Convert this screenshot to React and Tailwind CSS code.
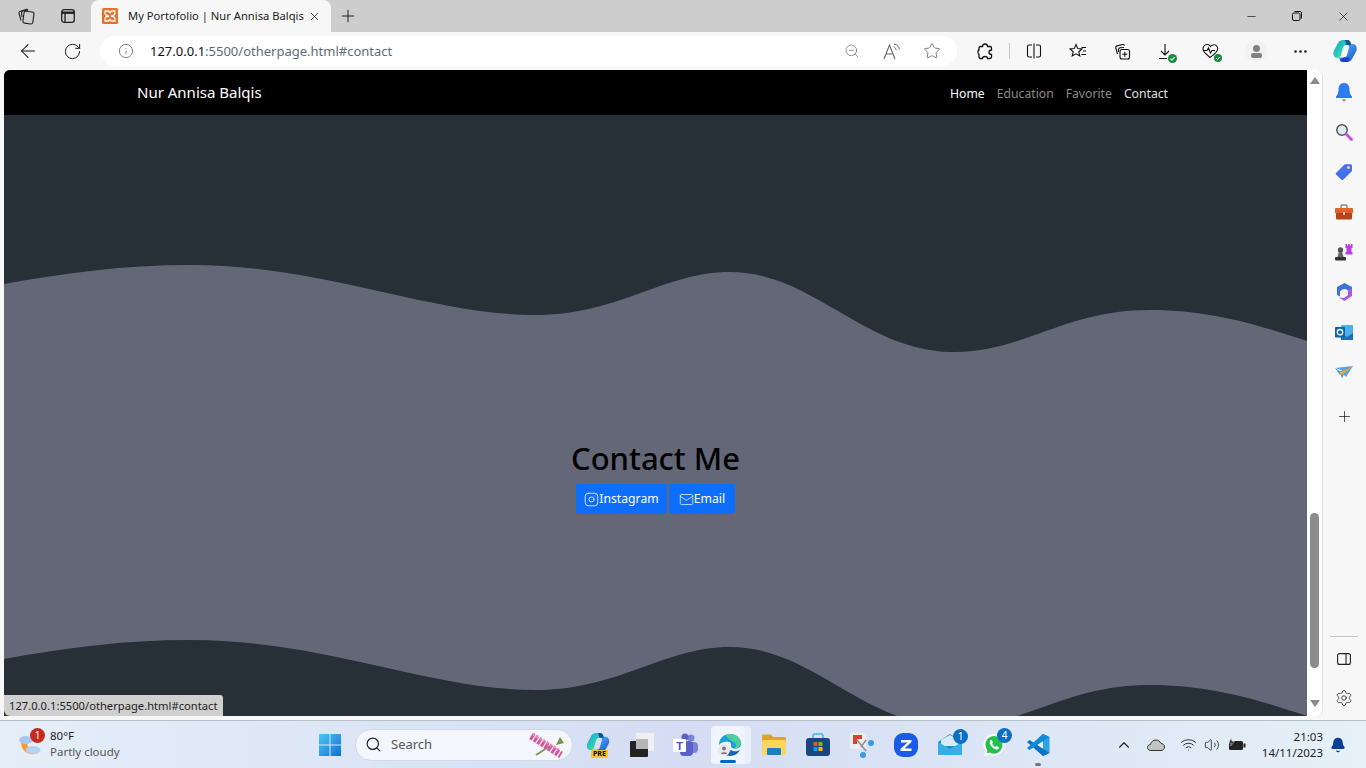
import React from "react";
import { ArrowLeft, RotateCw, Info, X, Plus, Minus, ZoomOut, Star, MoreHorizontal, Search, ChevronUp, Wifi, Volume2, Settings, Bell, Instagram, Mail } from "lucide-react";

const CURVE = "M0 19 C 60 8 120 0 186 0 C 320 0 425 50 531 50 C 615 50 660 7 726 7 C 810 7 860 87 951 87 C 1020 87 1060 45 1146 45 C 1210 45 1260 62 1303 76";

function Slot({ w = "w-[44px]", children }) {
  return <div className={`${w} h-full shrink-0 flex items-center justify-center`}>{children}</div>;
}

function Check({ size = 9 }) {
  return (
    <svg width={size} height={size} viewBox="0 0 10 10" className="absolute -right-[3px] -bottom-[3px]">
      <circle cx="5" cy="5" r="5" fill="#1b8a3d" />
      <path d="M2.7 5.2 4.4 6.8 7.4 3.6" stroke="#fff" strokeWidth="1.2" fill="none" />
    </svg>
  );
}

function CopilotMark({ w = 24, h = 22, id }) {
  return (
    <svg width={w} height={h} viewBox="0 0 24 22">
      <defs>
        <linearGradient id={`${id}a`} x1="0" y1="0" x2="1" y2="1"><stop offset="0" stopColor="#1b9fe0" /><stop offset=".55" stopColor="#2fd0b0" /><stop offset="1" stopColor="#9fe6a0" /></linearGradient>
        <linearGradient id={`${id}b`} x1="0" y1="0" x2="1" y2="1"><stop offset="0" stopColor="#4fc0f2" /><stop offset="1" stopColor="#1c4fd8" /></linearGradient>
      </defs>
      <path d="M10 0H14.500C16 0 17 1 17.500 2.500L18 5H13.500C11.500 5 10.500 6 10 7.500L8 15C7.500 17 6 18 4.500 18 2 18 .2 16 .2 13.500 .2 12.500 .5 11.500 1 10.500L5 3C6 1 8 0 10 0Z" fill={`url(#${id}a)`} />
      <path d="M13.500 4H19.500C22 4 23.800 6 23.800 8.500 23.800 9.500 23.500 10.500 23 11.500L19 19C18 21 16 22 14 22H9.500C8 22 7 21 6.500 19.500L6 17.500H10.500C12.500 17.500 13.500 16.500 14 15L16 7.500C16.300 6 15.500 4.500 13.500 4Z" fill={`url(#${id}b)`} />
      <path d="M7 19.500C7.500 21 8.500 22 10 22H15L17 17.500 11 17.500Z" fill="#1d3fc8" />
      <path d="M17.500 2.500C17 1 16 0 14.500 0H12L13.500 5H18Z" fill="#10508f" />
    </svg>
  );
}

function TabBar() {
  return (
    <div className="h-[32px] bg-[#cdcdcd] flex items-end shrink-0">
      <div className="w-[5px] shrink-0" />
      <Slot w="w-[42px]">
        <svg width="18" height="18" viewBox="0 0 18 18" fill="none" stroke="#222" strokeWidth="1.1">
          <rect x="6.5" y="4.5" width="10" height="12" rx="2" transform="rotate(8 11 10)" />
          <path d="M4 13.5 2 6.5C1.7 5.4 2.3 4.6 3.3 4.3L9 2.4C10 2.1 10.6 2.4 11 3.2" />
          <path d="M5 10 4.5 6C4.4 5 5 4.2 6 4L11 3" />
        </svg>
      </Slot>
      <Slot w="w-[42px]">
        <svg width="16" height="16" viewBox="0 0 16 16" fill="none" stroke="#222" strokeWidth="1.3">
          <rect x="1.7" y="1.7" width="12.6" height="12.6" rx="2.4" />
          <path d="M1.7 4.7H14.3" strokeWidth="2.4" />
          <path d="M5 4.7V14.3" />
        </svg>
      </Slot>
      <div className="w-[240px] h-[32px] ml-[2px] bg-[#f7f7f7] rounded-t-[8px] flex items-center pl-[11px] pr-[10px] shrink-0">
        <svg width="16" height="16" viewBox="0 0 16 16" className="shrink-0">
          <rect width="16" height="16" rx="1.5" fill="#e8702a" />
          <path d="M3.200 3H6.500L8 4.700 9.500 3H12.800V6L11 8 12.800 10V13H9.500L8 11.300 6.500 13H3.200V10L5 8 3.200 6Z" fill="none" stroke="#fff" strokeWidth="1.400" />
          <circle cx="6" cy="8" r="1.200" fill="#fff" />
          <circle cx="10" cy="8" r="1.200" fill="#fff" />
        </svg>
        <span className="ml-[10px] text-[11.200px] text-[#222] whitespace-nowrap flex-1 leading-none">My Portofolio | Nur Annisa Balqis</span>
        <X size={13} strokeWidth={1.5} color="#222" className="shrink-0" />
      </div>
      <Slot w="w-[34px]"><Plus size={20} strokeWidth={1.1} color="#111" /></Slot>
      <div className="flex-1" />
      <Slot w="w-[46px]"><Minus size={13} strokeWidth={1.2} color="#111" /></Slot>
      <Slot w="w-[46px]">
        <svg width="12" height="12" viewBox="0 0 12 12" fill="none" stroke="#111" strokeWidth="1">
          <rect x="1.500" y="3" width="7.500" height="7.500" rx="1.500" />
          <path d="M3.500 1.500H9C10 1.500 10.500 2 10.500 3V8.500" />
        </svg>
      </Slot>
      <Slot w="w-[46px]"><X size={15} strokeWidth={1.1} color="#111" /></Slot>
    </div>
  );
}

function Toolbar() {
  return (
    <div className="h-[38px] bg-[#f7f7f7] flex items-center shrink-0 pl-[6px]">
      <Slot><ArrowLeft size={22} strokeWidth={1.1} color="#111" /></Slot>
      <Slot><RotateCw size={19} strokeWidth={1.2} color="#111" /></Slot>
      <div className="ml-[6px] w-[857px] h-[30px] bg-white rounded-full flex items-center shrink-0 pl-[18px]">
        <Info size={16} strokeWidth={1.2} color="#666" />
        <span className="ml-[16px] text-[13px] text-[#5f6b78] leading-none"><span className="text-[#111]">127.0.0.1</span>:5500/otherpage.html#contact</span>
        <div className="flex-1" />
        <ZoomOut size={16} strokeWidth={1.2} color="#777" />
        <div className="w-[23px]" />
        <svg width="18" height="17" viewBox="0 0 18 17" fill="none" stroke="#666" strokeWidth="1.100" className="shrink-0">
          <path d="M1 16 6.500 2 12 16M3 11H10" />
          <path d="M10.500 4C12 4.300 13 5.500 13.200 7M11 1C14 1.300 16 3.500 16.400 6.500" strokeWidth="1" />
        </svg>
        <div className="w-[22px]" />
        <Star size={18} strokeWidth={1.1} color="#666" />
        <div className="w-[16px]" />
      </div>
      <div className="w-[6px]" />
      <Slot>
        <svg width="16" height="17" viewBox="0 0 16 17" fill="none" stroke="#111" strokeWidth="1.300">
          <path d="M5.500 3.500C5.500 2 6.500 1 8 1 9.500 1 10.500 2 10.500 3.500H13C14 3.500 14.500 4 14.500 5V7C13 7 12 8 12 9.300 12 10.800 13 11.500 14.500 11.500V13.500C14.500 14.800 14 15.500 13 15.500H10.500C10.500 14.500 9.500 13.500 8 13.500 6.500 13.500 5.500 14.500 5.500 15.500H3.500C2.500 15.500 2 14.800 2 14V11.500C1.500 11.500 1 10.500 1 9.300 1 8 1.500 7 2 7V5C2 4 2.500 3.500 3.500 3.500Z" />
        </svg>
      </Slot>
      <div className="w-[1px] h-[16px] bg-[#c8c8c8] mx-[2px] shrink-0" />
      <Slot>
        <svg width="16" height="16" viewBox="0 0 16 16" fill="none" stroke="#111" strokeWidth="1.1">
          <path d="M6 2H3C2 2 1.500 2.500 1.500 3.500V12.500C1.500 13.500 2 14 3 14H6M10 2H13C14 2 14.500 2.500 14.500 3.500V12.500C14.500 13.500 14 14 13 14H10M8 .5V15.500" />
        </svg>
      </Slot>
      <Slot>
        <svg width="18" height="16" viewBox="0 0 18 16" fill="none" stroke="#111" strokeWidth="1.1">
          <path d="M7 1.500 8.800 5.600 13 6 9.800 8.800 10.800 13 7 10.800 3.200 13 4.200 8.800 1 6 5.200 5.600Z" />
          <path d="M12.500 4.500H17M14 8H17M12.500 11.500H17" />
        </svg>
      </Slot>
      <Slot>
        <svg width="17" height="17" viewBox="0 0 17 17" fill="none" stroke="#111" strokeWidth="1.1">
          <path d="M3.500 11 1.800 5C1.500 4 2 3.200 3 2.900L8.500 1.500C9.500 1.300 10.200 1.800 10.500 2.500" />
          <path d="M4.500 9V6.500C4.500 5.500 5 5 6 4.800L10 4.500" />
          <rect x="6" y="6.500" width="9.500" height="9.500" rx="2" />
          <path d="M10.800 8.800V13.700M8.300 11.200H13.300" />
        </svg>
      </Slot>
      <Slot>
        <div className="relative">
          <svg width="16" height="17" viewBox="0 0 16 17" fill="none" stroke="#111" strokeWidth="1.1">
            <path d="M7 1V11.500M3 8 7 12 11 8M1 15.500H9" />
          </svg>
          <Check />
        </div>
      </Slot>
      <Slot>
        <div className="relative">
          <svg width="17" height="16" viewBox="0 0 17 16" fill="none" stroke="#111" strokeWidth="1.1">
            <path d="M8.500 3.500C7 1 3.500 1 2 3 .5 5 1 7.500 2.500 9.500L8 14.500C10 13 13.500 10.500 15 8 16.500 5 15 2 12.500 1.800 10.800 1.600 9.500 2.300 8.500 3.500Z" />
            <path d="M1 7.500H5L6.500 5 8.500 10 10 7.500H13" />
          </svg>
          <Check size={8} />
        </div>
      </Slot>
      <div className="w-[2px] shrink-0" />
      <Slot>
        <div className="w-[22px] h-[22px] rounded-full bg-[#f1f1f1] flex flex-col items-center justify-center">
          <div className="w-[7px] h-[7px] rounded-full bg-[#808080]" />
          <div className="w-[11px] h-[5px] rounded-[2px] bg-[#808080] mt-[1px]" />
        </div>
      </Slot>
      <Slot w="w-[45px]"><MoreHorizontal size={17} strokeWidth={1.8} color="#222" /></Slot>
      <Slot w="w-[43px]"><CopilotMark id="cpa" /></Slot>
    </div>
  );
}

function Page() {
  return (
    <div className="relative w-[1303px] ml-[4px] h-[646px] shrink-0 overflow-hidden rounded-tl-[6px] flex flex-col bg-[#272f37]">
      <nav className="h-[45px] bg-black flex items-center shrink-0 pl-[133px] pr-[139px]">
        <span className="text-[15px] text-white leading-none">Nur Annisa Balqis</span>
        <div className="flex-1" />
        <div className="flex items-center gap-[12px] text-[12.200px] leading-none pt-[3px]">
          <span className="text-white">Home</span>
          <span className="text-[#8a8a8a]">Education</span>
          <span className="text-[#8a8a8a]">Favorite</span>
          <span className="text-[#e2e2e2]">Contact</span>
        </div>
      </nav>
      <div className="h-[150px] shrink-0" />
      <svg width="1303" height="87" viewBox="0 0 1303 87" className="block shrink-0">
        <path d={`${CURVE} V87 H0 Z`} fill="#646777" />
      </svg>
      <section className="h-[288px] bg-[#646777] shrink-0 flex flex-col items-center pt-[86px]">
        <h1 className="text-[31px] font-medium text-black leading-[40px] whitespace-nowrap">Contact Me</h1>
        <div className="flex gap-[2px] mt-[6px]">
          <a className="h-[30px] w-[91px] bg-[#0d6efd] rounded-[2px] text-white text-[12.200px] flex items-center justify-center leading-none">
            <Instagram size={15} strokeWidth={1.3} />Instagram
          </a>
          <a className="h-[30px] w-[66px] bg-[#0d6efd] rounded-[2px] text-white text-[12.200px] flex items-center justify-center leading-none">
            <Mail size={15} strokeWidth={1.1} />Email
          </a>
        </div>
      </section>
      <svg width="1303" height="76" viewBox="0 0 1303 76" className="block shrink-0">
        <path d={`${CURVE} V87 H0 Z`} fill="#272f37" />
        <path d={`${CURVE} V0 H0 Z`} fill="#646777" />
      </svg>
      <div className="absolute left-0 bottom-0 h-[21px] w-[219px] bg-[#cfcfcf] rounded-tr-[3px] rounded-bl-[6px] flex items-center pl-[5px] text-[11.200px] text-[#222] leading-none whitespace-nowrap">
        127.0.0.1:5500/otherpage.html#contact
      </div>
    </div>
  );
}

function Scrollbar() {
  return (
    <div className="w-[16px] h-[646px] bg-white shrink-0 rounded-r-[6px] border-r border-[#e2e2e2] flex flex-col items-center">
      <div className="mt-[7px] w-0 h-0 border-l-[5px] border-r-[5px] border-b-[7px] border-l-transparent border-r-transparent border-b-[#8a8a8a]" />
      <div className="mt-[429px] w-[9px] h-[155px] rounded-full bg-[#8b8b8b]" />
      <div className="mt-[32px] w-0 h-0 border-l-[5px] border-r-[5px] border-t-[7px] border-l-transparent border-r-transparent border-t-[#8a8a8a]" />
    </div>
  );
}

function Side({ children }) {
  return <div className="h-[40px] w-full flex items-center justify-center shrink-0">{children}</div>;
}

function Sidebar() {
  return (
    <div className="flex-1 h-[646px] flex flex-col items-center pt-[2px] pr-[1px]">
      <Side>
        <svg width="18" height="20" viewBox="0 0 18 20">
          <path d="M9 1C5 1 3.500 4 3.500 7.500 3.500 11 2.500 13 1 14.500V16H17V14.500C15.500 13 14.500 11 14.500 7.500 14.500 4 13 1 9 1Z" fill="#2f7bf0" />
          <path d="M6.500 17.500H11.500L9 19.500Z" fill="#777" />
        </svg>
      </Side>
      <Side>
        <svg width="18" height="18" viewBox="0 0 18 18" fill="none">
          <circle cx="7" cy="7" r="5.200" fill="#d7ecf7" stroke="#555" strokeWidth="1.500" />
          <path d="M11 11 16.500 16.500" stroke="#c04ee0" strokeWidth="2.800" strokeLinecap="round" />
        </svg>
      </Side>
      <Side>
        <svg width="18" height="18" viewBox="0 0 18 18">
          <path d="M1 10 9 2C9.500 1.500 10 1.200 11 1.200H15.500C16.300 1.200 17 1.800 17 2.700V7C17 8 16.700 8.500 16 9L8.500 16.500C7.800 17.200 7 17.200 6.300 16.500L1 11.500C.6 11 .6 10.500 1 10Z" fill="#4470ee" />
          <circle cx="13.500" cy="4.500" r="1.600" fill="#f6d54a" />
        </svg>
      </Side>
      <Side>
        <svg width="18" height="16" viewBox="0 0 18 16">
          <path d="M6 4V2C6 1.400 6.500 1 7 1H11C11.500 1 12 1.400 12 2V4" fill="none" stroke="#8a8a8a" strokeWidth="1.500" />
          <rect y="4" width="18" height="5.500" rx="1" fill="#e2622a" />
          <rect x="1" y="9" width="16" height="6.500" rx="1" fill="#b8431b" />
          <rect x="8" y="8" width="2" height="3" fill="#e9d6c8" />
        </svg>
      </Side>
      <Side>
        <svg width="18" height="18" viewBox="0 0 18 18">
          <circle cx="5.500" cy="7" r="2.700" fill="#555" />
          <path d="M3.800 9H7.200L8.500 14H2.500Z" fill="#666" />
          <rect y="14" width="11" height="3.500" rx="1" fill="#333" />
          <path d="M10.500 1H12V2.500H13.200V1H14.800V2.500H16V1H17.500V5H16.500V9H17.500V11.500H10.500V9H11.500V5H10.500Z" fill="#b83ee8" />
        </svg>
      </Side>
      <Side>
        <svg width="17" height="18" viewBox="0 0 17 18">
          <path d="M8.500 0 16 4V9L8.500 6 4 8V13.500L1 12V4Z" fill="#3f74d8" />
          <path d="M16 5V13L8.500 18 3 14.500 8 15 12 12V8Z" fill="#a85bd6" />
          <circle cx="8.500" cy="9" r="3" fill="#f2f2f2" />
        </svg>
      </Side>
      <Side>
        <svg width="18" height="17" viewBox="0 0 18 17">
          <rect x="6" y="1" width="12" height="15" rx="1" fill="#4db2e8" />
          <path d="M6 9 12 13 18 9V16H6Z" fill="#1c6fb8" />
          <rect y="3" width="10" height="10.500" rx="1" fill="#0f62ad" />
          <circle cx="5" cy="8.200" r="2.700" fill="none" stroke="#fff" strokeWidth="1.300" />
        </svg>
      </Side>
      <Side>
        <svg width="18" height="13" viewBox="0 0 18 13">
          <path d="M0 2 18 0 9 5Z" fill="#52a7e8" />
          <path d="M18 0 5 5.500 7 12.500 9 8Z" fill="#3d8edc" />
          <path d="M18 0 4.500 6.500 5 9 9 8Z" fill="#f4a72c" />
          <path d="M0 2 5 5.500 5 9Z" fill="#3d8edc" />
          <path d="M18 0 11 11 8 8Z" fill="#52a7e8" />
        </svg>
      </Side>
      <div className="h-[48px] w-full flex items-center justify-center shrink-0"><Plus size={17} strokeWidth={1.1} color="#222" /></div>
      <div className="flex-1" />
      <div className="w-[28px] h-px bg-[#c4c4c4] shrink-0" />
      <div className="h-[43px] w-full flex items-center justify-center shrink-0">
        <svg width="14" height="12" viewBox="0 0 14 12" fill="none" stroke="#222" strokeWidth="1.100">
          <rect x=".6" y=".6" width="12.800" height="10.800" rx="2" />
          <path d="M9 .6V11.400" />
        </svg>
      </div>
      <div className="h-[36px] w-full flex items-center justify-center shrink-0"><Settings size={18} strokeWidth={1.100} color="#222" /></div>
    </div>
  );
}

function TaskIcon({ children, active }) {
  return (
    <div className="relative w-[44px] h-[40px] shrink-0 flex items-center justify-center">
      {active && <div className="absolute left-[5px] top-[1px] w-[38px] h-[38px] rounded-[4px] bg-[#e9eefa]" />}
      {active && <div className="absolute left-[3px] top-[1px] w-[34px] h-[38px] rounded-[4px] bg-[#f0f4fc]" />}
      <div className="relative flex items-center justify-center">{children}</div>
      {active && <div className="absolute bottom-[2px] left-[12px] w-[16px] h-[3px] rounded-full bg-[#0067c0]" />}
    </div>
  );
}

function Badge({ n, color = "bg-[#0b6fc4]" }) {
  return <span className={`absolute right-[-6px] top-[-5px] w-[15px] h-[15px] rounded-full ${color} text-white text-[10px] flex items-center justify-center leading-none`}>{n}</span>;
}

function Taskbar() {
  return (
    <div className="h-[48px] border-t border-[#b9bfc9] bg-gradient-to-r from-[#e5eff9] via-[#d4ddf3] to-[#e5f0f8] flex items-center shrink-0 text-[#222]">
      <div className="w-[315px] shrink-0 h-full flex items-center pl-[18px]">
        <div className="relative w-[26px] h-[26px] shrink-0">
          <svg width="26" height="26" viewBox="0 0 26 26">
            <path d="M3 10C3 19 11 25 20 21 13 20 9 16 9 9Z" fill="#f29b2e" />
            <ellipse cx="8" cy="8" rx="7" ry="4" fill="#a9c6ee" />
            <ellipse cx="15" cy="18" rx="7.500" ry="4" fill="#b9d2f3" />
          </svg>
          <span className="absolute right-[-1px] top-[-4px] w-[15px] h-[15px] rounded-full bg-[#c42b1c] text-white text-[10px] flex items-center justify-center leading-none">1</span>
        </div>
        <div className="ml-[6px] flex flex-col leading-none pb-[2px]">
          <span className="text-[11.500px] text-[#222]">80°F</span>
          <span className="text-[11.500px] text-[#555] mt-[4px]">Partly cloudy</span>
        </div>
      </div>
      <Slot w="w-[30px]">
        <svg width="24" height="24" viewBox="0 0 24 24">
          <defs><linearGradient id="w" x1="0" y1="0" x2="1" y2="1"><stop offset="0" stopColor="#4fc5f5" /><stop offset="1" stopColor="#0a72d6" /></linearGradient></defs>
          <path d="M1 1H11.500V11.500H1ZM12.500 1H23V11.500H12.500ZM1 12.500H11.500V23H1ZM12.500 12.500H23V23H12.500Z" fill="url(#w)" />
        </svg>
      </Slot>
      <div className="ml-[10px] w-[218px] h-[32px] rounded-full bg-[#f3f6fc] border border-[#d3d9e6] flex items-center pl-[9px] pr-[4px] shrink-0">
        <Search size={17} strokeWidth={1.700} color="#222" />
        <span className="ml-[9px] text-[13px] text-[#555] leading-none flex-1">Search</span>
        <svg width="40" height="28" viewBox="0 0 40 28">
          <path d="M8 24 22 15" stroke="#7f9a55" strokeWidth="2" />
          <path d="M3 5 33 24" stroke="#d9559b" strokeWidth="7" strokeDasharray="3 1.200" />
          <path d="M5 3 31 19" stroke="#ee8cc0" strokeWidth="3" strokeDasharray="2 2" />
          <path d="M32 6 36 12 28 14Z" fill="#7a9445" />
        </svg>
      </div>
      <div className="ml-[3px] flex items-center">
        <TaskIcon>
          <div className="relative pb-[3px]">
            <CopilotMark w={24} h={21} id="cpb" />
            <span className="absolute left-[5px] -bottom-[1px] bg-[#f6c52c] text-black text-[7px] font-bold px-[2px] rounded-[1px] leading-[8px]">PRE</span>
          </div>
        </TaskIcon>
        <TaskIcon>
          <div className="relative w-[24px] h-[24px]">
            <div className="absolute right-0 top-0 w-[18px] h-[18px] bg-[#f0f0f0] rounded-[1px]" />
            <div className="absolute left-0 bottom-0 w-[18px] h-[16px] bg-[#222] rounded-[1px]" />
            <div className="absolute left-[6px] top-[6px] w-[12px] h-[10px] bg-[#b5b5b5]" />
          </div>
        </TaskIcon>
        <TaskIcon>
          <svg width="26" height="24" viewBox="0 0 26 24">
            <circle cx="18" cy="5" r="3.500" fill="#7b83d8" />
            <rect x="12" y="9" width="13" height="11" rx="4" fill="#7b83d8" />
            <circle cx="12" cy="4" r="3.500" fill="#5b5fc7" />
            <rect x="7" y="8" width="13" height="15" rx="4" fill="#5b5fc7" />
            <rect x="0" y="6" width="13" height="13" rx="1" fill="#fff" />
            <text x="6.500" y="16.500" textAnchor="middle" fontSize="11" fontWeight="700" fill="#4b53bc" fontFamily="Liberation Sans">T</text>
          </svg>
        </TaskIcon>
        <TaskIcon active>
          <svg width="24" height="24" viewBox="0 0 24 24">
            <defs>
              <linearGradient id="edg" x1="0" y1="0" x2="1" y2="1"><stop offset="0" stopColor="#1b7fd0" /><stop offset="1" stopColor="#0c4f9e" /></linearGradient>
            </defs>
            <path d="M1 12C1 5 6 1 12 1 18 1 23 5 23 11 23 15 19 16 15.500 15.500 11 15 15 10 11 9 7 8 2 10 1 12Z" fill="#1ba0dc" />
            <path d="M8 2C13 -.5 21 2 23 9 23 13 20 15.500 16.500 15.500 19 13 18 9 14 8 11 6.500 9 5 8 2Z" fill="#46d29a" />
            <path d="M6 21C10 24 18 24 22 17 19 19 15 18.500 13 17 11 18 8 20 6 21Z" fill="url(#edg)" />
            <circle cx="6" cy="17" r="6" fill="#e8e8e8" />
            <circle cx="6" cy="15.500" r="2" fill="#777" />
            <path d="M2.800 21C3 18.500 9 18.500 9.200 21Z" fill="#777" />
          </svg>
        </TaskIcon>
        <TaskIcon>
          <svg width="24" height="22" viewBox="0 0 24 22">
            <path d="M0 2C0 1 .7 .5 1.500 .5H9L11 3H22.500C23.300 3 24 3.700 24 4.500V8H0Z" fill="#e0a526" />
            <rect y="6" width="24" height="15" rx="1.500" fill="#fbd55f" />
            <rect x="5" y="14" width="14" height="7" rx="1" fill="#1a7fcb" />
          </svg>
        </TaskIcon>
        <TaskIcon>
          <svg width="24" height="24" viewBox="0 0 24 24">
            <path d="M7 6V3C7 1.800 8 1 9 1H15C16 1 17 1.800 17 3V6" fill="none" stroke="#42b3e8" strokeWidth="1.500" />
            <rect y="5" width="24" height="18" rx="3" fill="#17477e" />
            <rect x="7.500" y="9" width="4" height="4" fill="#f25022" />
            <rect x="12.500" y="9" width="4" height="4" fill="#7fba00" />
            <rect x="7.500" y="14" width="4" height="4" fill="#00a4ef" />
            <rect x="12.500" y="14" width="4" height="4" fill="#ffb900" />
          </svg>
        </TaskIcon>
        <TaskIcon>
          <svg width="26" height="26" viewBox="0 0 26 26">
            <rect x="1" y="1" width="16" height="16" rx="2" fill="#ececec" />
            <path d="M4 3H13V7H8V12H4Z" fill="#d8432f" />
            <path d="M8 8 17 19M17 8 12 15" stroke="#8a8f98" strokeWidth="1.500" />
            <circle cx="22" cy="11" r="3" fill="#3a9be0" />
            <circle cx="14" cy="23" r="3" fill="#3a9be0" />
          </svg>
        </TaskIcon>
        <TaskIcon>
          <svg width="24" height="24" viewBox="0 0 24 24">
            <rect width="24" height="24" rx="9" fill="#1a5ce8" />
            <path d="M7 7H17.500V9L10.500 15.500H17.500V18H6.500V16L13.500 9.500H7Z" fill="#fff" />
          </svg>
        </TaskIcon>
        <TaskIcon>
          <svg width="24" height="22" viewBox="0 0 24 22">
            <path d="M0 8 12 0 24 8V21H0Z" fill="#1d8ed8" />
            <path d="M3 6 12 1 21 6V12H3Z" fill="#d7ecf9" />
            <path d="M0 8 12 15 24 8V21H0Z" fill="#38aee9" />
          </svg>
          <Badge n="1" />
        </TaskIcon>
        <TaskIcon>
          <svg width="24" height="24" viewBox="0 0 24 24">
            <path d="M12 1C6 1 1.500 6 1.500 11.500 1.500 14 2.300 16 3.500 17.500L2 23 7.500 21.500C9 22.300 10.500 22.700 12 22.700 18 22.700 22.500 17.500 22.500 11.500 22.500 6 18 1 12 1Z" fill="#fff" />
            <path d="M12 3C7 3 3.500 7 3.500 11.500 3.500 14 4.500 16 5.500 17.500L4.800 20.300 7.700 19.500C9 20.300 10.500 20.700 12 20.700 17 20.700 20.500 16.500 20.500 11.500 20.500 7 17 3 12 3Z" fill="#27c04f" />
            <path d="M8.500 7C7.500 8 7.500 10 8.500 12 10 14.500 12.500 16.500 15 16.500 16.500 16.500 17 15 16.800 14.200L14.500 13 13.500 14C12 13.500 10.800 12 10.200 10.800L11 9.500 9.800 7Z" fill="#fff" />
          </svg>
          <Badge n="4" />
        </TaskIcon>
        <TaskIcon>
          <svg width="24" height="24" viewBox="0 0 24 24">
            <path d="M17 1 23.500 4V20L17 23 6 12.500Z" fill="#2aa3e8" />
            <path d="M17 7 17 17 10 12Z" fill="#e4eff9" />
            <path d="M17 23 1 9 3.500 7 23.500 20Z" fill="#0a72c0" />
            <path d="M1 15 17 1 23.500 4 3.500 17Z" fill="#0f8ad6" />
          </svg>
          <div className="absolute bottom-[-9px] left-[9px] w-[6px] h-[3px] rounded-full bg-[#777]" />
        </TaskIcon>
      </div>
      <div className="flex-1" />
      <div className="flex items-center h-full shrink-0">
        <ChevronUp size={18} strokeWidth={1.500} color="#222" />
        <svg width="18" height="12" viewBox="0 0 18 12" className="ml-[14px]">
          <path d="M4 11.500C1.500 11.500 .5 10 .5 8.500.5 6.500 2 5.500 3.500 5.500 4 3 6 1 9 1 11.500 1 13 2.500 14 4.500 16 4.500 17.500 6 17.500 8 17.500 10 16 11.500 14 11.500Z" fill="#c4c4c4" stroke="#333" />
        </svg>
        <Wifi size={17} strokeWidth={1.300} color="#222" className="ml-[15px]" />
        <Volume2 size={16} strokeWidth={1.200} color="#222" className="ml-[7px]" />
        <svg width="18" height="13" viewBox="0 0 18 13" className="ml-[8px]">
          <rect x="1" y="3" width="14" height="9" rx="1.500" fill="#222" />
          <rect x="15.500" y="5.500" width="2" height="4" fill="#222" />
          <path d="M3 0 1 5H3.500L2.500 8 6.500 3.500H4Z" fill="#222" stroke="#e5f0f8" strokeWidth=".5" />
        </svg>
        <div className="ml-[15px] flex flex-col items-end text-[11.500px] leading-none text-[#222] gap-[4px] w-[62px]">
          <span>21:03</span>
          <span>14/11/2023</span>
        </div>
        <Bell size={16} fill="#0b3f94" color="#0b3f94" className="ml-[7px] mr-[20px]" />
      </div>
    </div>
  );
}

export default function App() {
  return (
    <div className="w-[1366px] h-[768px] overflow-hidden flex flex-col bg-[#f7f7f7]" style={{ fontFamily: '"Noto Sans", "Open Sans", sans-serif' }}>
      <TabBar />
      <Toolbar />
      <div className="flex h-[646px] shrink-0">
        <Page />
        <Scrollbar />
        <Sidebar />
      </div>
      <div className="h-[4px] shrink-0" />
      <Taskbar />
    </div>
  );
}
